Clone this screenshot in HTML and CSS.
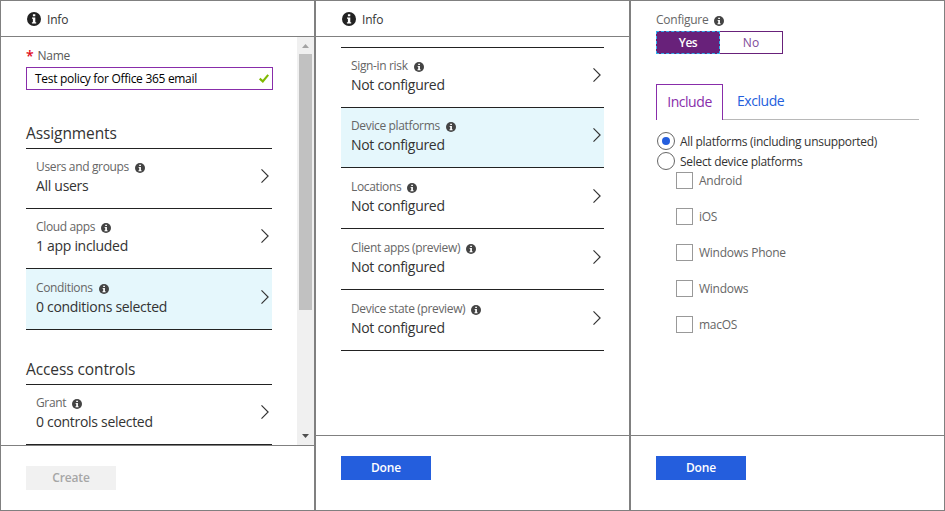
FILE: index.html
```html
<!DOCTYPE html>
<html lang="en">
<head>
<meta charset="utf-8">
<title>Conditional access policy</title>
<link rel="stylesheet" href="styles.css">
</head>
<body>
<svg class="defs" width="0" height="0">
  <symbol id="info" viewBox="0 0 14 14">
    <circle cx="7" cy="7" r="7" fill="currentColor"/>
    <path d="M5.900 2.300h2.400v2H5.900zM5 5.500h3.300v4.800h.9v1.200H4.900v-1.200h1V6.700H5z" fill="#fff"/>
  </symbol>
  <symbol id="chevron" viewBox="0 0 8 14">
    <path d="M.5.4 7.1 7 .5 13.6" fill="none" stroke="#333" stroke-width="1.15"/>
  </symbol>
</svg>
<main class="blades">
  <section class="blade">
    <header class="bar"><svg class="bar-icon"><use href="#info"/></svg><span>Info</span></header>
    <div class="body">
      <div class="content policy">
        <label class="name"><b>*</b>Name</label>
        <div class="input"><span>Test policy for Office 365 email</span>
          <svg class="check" viewBox="0 0 10 9"><path d="M.7 4.600 3.800 7.400 9.200.8" fill="none" stroke="#7fba00" stroke-width="2.1"/></svg>
        </div>
        <h2 class="assign">Assignments</h2>
        <div class="list">
          <div class="row"><div class="text"><div class="label">Users and groups<svg><use href="#info"/></svg></div><div class="value">All users</div></div><svg class="chev"><use href="#chevron"/></svg></div>
          <div class="row"><div class="text"><div class="label">Cloud apps<svg><use href="#info"/></svg></div><div class="value">1 app included</div></div><svg class="chev"><use href="#chevron"/></svg></div>
          <div class="row tall selected"><div class="text"><div class="label">Conditions<svg><use href="#info"/></svg></div><div class="value">0 conditions selected</div></div><svg class="chev"><use href="#chevron"/></svg></div>
        </div>
        <h2 class="access">Access controls</h2>
        <div class="list">
          <div class="row"><div class="text"><div class="label">Grant<svg><use href="#info"/></svg></div><div class="value">0 controls selected</div></div><svg class="chev"><use href="#chevron"/></svg></div>
        </div>
      </div>
      <div class="scrollbar">
        <svg class="arrow" viewBox="0 0 17 17"><path d="M5 11 8.500 7l3.500 4z" fill="#a3a3a3"/></svg>
        <div class="thumb"></div>
        <svg class="arrow" viewBox="0 0 17 17"><path d="M5 6h7L8.500 10z" fill="#505050"/></svg>
      </div>
    </div>
    <footer class="foot low"><button class="btn disabled">Create</button></footer>
  </section>

  <section class="blade">
    <header class="bar"><svg class="bar-icon"><use href="#info"/></svg><span>Info</span></header>
    <div class="body">
      <div class="content conditions">
        <div class="list">
          <div class="row"><div class="text"><div class="label">Sign-in risk<svg><use href="#info"/></svg></div><div class="value">Not configured</div></div><svg class="chev"><use href="#chevron"/></svg></div>
          <div class="row selected"><div class="text"><div class="label">Device platforms<svg><use href="#info"/></svg></div><div class="value">Not configured</div></div><svg class="chev"><use href="#chevron"/></svg></div>
          <div class="row tall"><div class="text"><div class="label">Locations<svg><use href="#info"/></svg></div><div class="value">Not configured</div></div><svg class="chev"><use href="#chevron"/></svg></div>
          <div class="row tall"><div class="text"><div class="label">Client apps (preview)<svg><use href="#info"/></svg></div><div class="value">Not configured</div></div><svg class="chev"><use href="#chevron"/></svg></div>
          <div class="row tall"><div class="text"><div class="label">Device state (preview)<svg><use href="#info"/></svg></div><div class="value">Not configured</div></div><svg class="chev"><use href="#chevron"/></svg></div>
        </div>
      </div>
    </div>
    <footer class="foot"><button class="btn">Done</button></footer>
  </section>

  <section class="blade">
    <div class="body">
      <div class="content platforms">
        <div class="label">Configure<svg><use href="#info"/></svg></div>
        <div class="toggle"><span class="on">Yes</span><span>No</span></div>
        <nav class="tabs"><span class="tab active">Include</span><span class="tab">Exclude</span></nav>
        <div class="radio"><i class="checked"></i><span>All platforms (including unsupported)</span></div>
        <div class="radio"><i></i><span>Select device platforms</span></div>
        <div class="checks">
          <div class="check-row"><i></i><span>Android</span></div>
          <div class="check-row"><i></i><span>iOS</span></div>
          <div class="check-row"><i></i><span>Windows Phone</span></div>
          <div class="check-row"><i></i><span>Windows</span></div>
          <div class="check-row"><i></i><span>macOS</span></div>
        </div>
      </div>
    </div>
    <footer class="foot"><button class="btn">Done</button></footer>
  </section>
</main>
</body>
</html>
```
FILE: styles.css
```css
* { box-sizing: border-box; }
body {
  margin: 0;
  font: 12px/16px "Open Sans", "Noto Sans", sans-serif;
  color: #333;
  background: #fff;
}
.defs { position: absolute; }
svg { display: block; flex: none; }
.blades { display: grid; grid-template-columns: repeat(3, 315px); height: 511px; }
.blade { display: flex; flex-direction: column; min-width: 0; height: 511px; border: 1px solid #808080; }
.bar { display: flex; align-items: center; gap: 6px; height: 36px; padding: 2px 0 0 26px; border-bottom: 1px solid #808080; flex: none; letter-spacing: -.2px; }
.bar-icon { width: 14px; height: 14px; color: #222; margin-top: -2px; }
.body { display: flex; flex: 1; min-height: 0; overflow: hidden; }
.content { flex: 1; min-width: 0; padding: 0 25px; }
.policy { padding-right: 24px; }
.conditions { padding-top: 10px; }

.name { display: flex; gap: 4px; height: 30px; padding-top: 11px; letter-spacing: -.25px; color: #595959; }
.name b { color: #e00b1c; font-size: 14px; font-weight: 600; }
.input { display: flex; align-items: center; justify-content: space-between; width: 247px; height: 23px; padding: 0 3px 0 8px; border: 1px solid #882daa; letter-spacing: -.3px; color: #000; }
.check { width: 10px; height: 9px; }
h2 { margin: 0; font-size: 15.500px; font-weight: 400; line-height: 20px; letter-spacing: -.1px; }
.assign { padding: 33px 0 5px; }
.access { padding: 29px 0 5px; }

.list { width: 246px; border-top: 1px solid #222; }
.conditions .list { width: 263px; }
.row { display: flex; justify-content: space-between; height: 60px; padding: 10px 3px 0 10px; border-bottom: 1px solid #222; }
.row.tall { height: 61px; padding-top: 11px; }
.selected { background: #e5f7fc; }
.label { display: flex; align-items: center; gap: 6px; height: 16px; letter-spacing: -.35px; color: #666; white-space: nowrap; }
.label svg { width: 10px; height: 10px; margin-top: 2px; color: #444; }
.value { height: 20px; margin-top: 1px; font-size: 14px; line-height: 20px; letter-spacing: -.3px; color: #333; white-space: nowrap; }
.chev { width: 8px; height: 14px; margin-top: 10px; }

.scrollbar { display: flex; flex-direction: column; width: 17px; background: #f0f0f0; }
.arrow { width: 17px; height: 17px; }
.thumb { width: 13px; height: 256px; margin: 0 auto 118px 2px; background: #c1c1c1; flex: none; }

.foot { height: 75px; padding: 20px 25px; border-top: 1px solid #808080; flex: none; }
.foot.low { height: 65px; }
.btn { display: block; width: 90px; height: 24px; padding: 0; border: 0; background: #245edd; color: #fff; font: 600 12px/24px "Open Sans", sans-serif; letter-spacing: -.15px; }
.btn.disabled { background: #f1f1f1; color: #a6a6a6; }

.platforms { padding-top: 11px; }
.platforms > .label { letter-spacing: -.25px; }
.toggle { display: flex; width: 127px; height: 23px; margin-top: 3px; border: 1px solid #68217a; line-height: 21px; text-align: center; color: #804998; }
.toggle span { flex: 1; }
.toggle .on { flex: 0 0 64px; margin: -1px 0 -1px -1px; line-height: 21px; border: 1px dashed #32b1ee; background: #68217a; color: #fff; font-weight: 600; letter-spacing: -.5px; }
.tabs { display: flex; height: 36px; margin-top: 30px; }
.tab { flex: 1; padding: 7px 0 0 14px; border-bottom: 1px solid #b8b8b8; font-size: 14px; line-height: 20px; letter-spacing: -.45px; color: #245edd; }
.tab.active { flex: 0 0 67px; padding: 7px 0 0; text-align: center; color: #882daa; border: 1px solid #882daa; border-bottom: 0; }
.radio { display: flex; gap: 5px; height: 20px; margin-left: 1px; line-height: 20px; letter-spacing: -.3px; white-space: nowrap; }
.tabs + .radio { margin-top: 12px; }
.radio i { display: grid; place-items: center; width: 18px; height: 18px; border: 1px solid #666; border-radius: 50%; flex: none; }
.radio .checked::before { content: ""; width: 8px; height: 8px; border-radius: 50%; background: #245edd; }
.checks { display: grid; gap: 19px; padding-left: 20px; }
.check-row { display: flex; gap: 6px; height: 17px; line-height: 18px; letter-spacing: -.25px; color: #666; }
.check-row i { width: 17px; height: 17px; border: 1px solid #999; }
```
